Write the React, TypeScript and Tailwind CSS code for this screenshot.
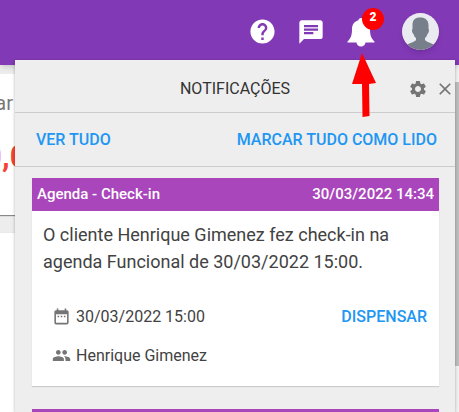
import React from "react";
import { MdHelp, MdChat, MdSettings, MdClose, MdDateRange, MdGroup } from "react-icons/md";

function Avatar() {
  return (
    <svg viewBox="0 0 37 37" className="size-[37px] rounded-full shadow-md" aria-hidden="true">
      <rect width="37" height="37" fill="#e9ebf0" />
      <path
        d="M10.500 12C10.500 6 14 4.500 18.500 4.500S26.500 7 26.500 12V16C27.500 16.500 27 20 25.500 21C25 23 24 24 23 25V27C24.500 29 29 30 33 32V37H4V32C8 30 12.500 29 14 27V25C12.500 24 12 22.500 11.500 21C10 20 9.500 16.500 10.500 16Z"
        fill="#77808a"
      />
    </svg>
  );
}

function Bell() {
  return (
    <svg viewBox="0 0 28 29" className="h-[29px] w-7" fill="currentColor" aria-hidden="true">
      <path d="M14 0C12.500 0 11.500 1 11.500 2.200C7.500 3.200 5 6.500 5 11C5 18 3.500 20.500 0.500 23.500V24.500H9.500C9.500 26.800 11.500 28.500 14 28.500S18.500 26.800 18.500 24.500H27.500V23.500C24.500 20.500 23 18 23 11C23 6.500 20.500 3.200 16.500 2.200C16.500 1 15.500 0 14 0Z" />
    </svg>
  );
}

function TopBar() {
  return (
    <header className="relative flex h-[65px] items-start justify-end bg-[#8239b5] pr-5 shadow-md">
      <button aria-label="Ajuda" className="mt-[17px] text-white">
        <MdHelp size={29} />
      </button>
      <button aria-label="Mensagens" className="mt-[18px] ml-5 text-white">
        <MdChat size={28} />
      </button>
      <button aria-label="Notificações" className="relative mt-[18px] ml-[22px] text-white">
        <Bell />
        <span className="absolute -top-[10px] right-[-9px] flex size-[22px] items-center justify-center rounded-full bg-[#ff0000] pb-[5px] text-[12px] leading-none font-black">
          2
        </span>
      </button>
      <button aria-label="Perfil" className="mt-[13px] ml-[27px]">
        <Avatar />
      </button>
    </header>
  );
}

function Dashboard() {
  return (
    <main className="flex items-start justify-between">
      <div className="w-6 pt-[9px]">
        <section className="h-[141px] overflow-hidden bg-white pt-[17px] shadow-[0_1px_1px_#888]">
          <p className="flex w-[13px] justify-end text-[20px] leading-6 text-[#777]">ar</p>
          <p className="mt-[22px] flex h-10 items-center text-[31px] leading-10 font-bold text-[#f44336]">
            <span className="flex w-[2px] shrink-0 justify-end text-[#ef9af5]">0</span>
            ,0
          </p>
        </section>
        <section className="mt-[18px] h-[240px] bg-white shadow" />
      </div>
      <div className="h-[347px] w-3 bg-[#f1f1f1] pt-[17px]">
        <div className="h-[284px] bg-[#bdbdbd]" />
      </div>
    </main>
  );
}

function NotificationCard() {
  return (
    <article className="bg-white shadow-[0_1px_1px_#ccc]">
      <header className="flex h-[33px] items-center justify-between bg-[#aa46bc] px-[5px] text-[15px] font-medium text-white">
        <h2>Agenda - Check-in</h2>
        <time>30/03/2022 14:34</time>
      </header>
      <p className="px-[11px] pt-[10px] text-[18px] leading-[27px] text-[#424242]">
        O cliente Henrique Gimenez fez check-in na agenda Funcional de 30/03/2022 15:00.
      </p>
      <div className="mt-[22px] flex items-start justify-between pr-3 pb-[11px] pl-5 text-[16px] text-[#424242]">
        <div>
          <p className="flex h-[39px] items-center gap-[5px]">
            <MdDateRange size={19} color="#757575" />
            30/03/2022 15:00
          </p>
          <p className="flex h-[39px] items-center gap-[5px]">
            <MdGroup size={19} color="#757575" />
            Henrique Gimenez
          </p>
        </div>
        <button className="flex h-[39px] items-center font-medium text-[#2196f3]">DISPENSAR</button>
      </div>
    </article>
  );
}

function NotificationPanel() {
  return (
    <aside className="absolute inset-x-0 top-[60px] bottom-0 mr-1 ml-[15px] overflow-hidden bg-[#eee] shadow-[0_1px_3px_rgba(0,0,0,0.3)]">
      <div className="grid h-[53px] grid-cols-[1fr_auto_1fr] items-center border-b border-[#ccc] pt-[6px]">
        <h1 className="col-start-2 text-[16px] text-[#333]">NOTIFICAÇÕES</h1>
        <div className="flex items-center justify-end gap-[7px] text-[#757575]">
          <button aria-label="Configurações"><MdSettings size={20} /></button>
          <button aria-label="Fechar"><MdClose size={20} /></button>
        </div>
      </div>
      <nav className="flex h-[54px] items-center justify-between border-b border-[#ccc] pr-[18px] pl-[21px] text-[16px] font-medium text-[#2196f3]">
        <button>VER TUDO</button>
        <button>MARCAR TUDO COMO LIDO</button>
      </nav>
      <div className="flex flex-col gap-[23px] pt-[11px] pr-4 pl-[17px]">
        <NotificationCard />
        <NotificationCard />
      </div>
    </aside>
  );
}

export default function App() {
  return (
    <div className="relative h-screen overflow-hidden bg-[#ededed] font-[Roboto,sans-serif]">
      <TopBar />
      <Dashboard />
      <NotificationPanel />
      <svg viewBox="0 0 24 65" className="pointer-events-none absolute top-[53px] right-[83px] h-[65px] w-6" aria-hidden="true">
        <path d="M10 0L24 30L17 31L17.500 63L10.500 64L10 31L0 31Z" fill="#ff0000" />
      </svg>
    </div>
  );
}
